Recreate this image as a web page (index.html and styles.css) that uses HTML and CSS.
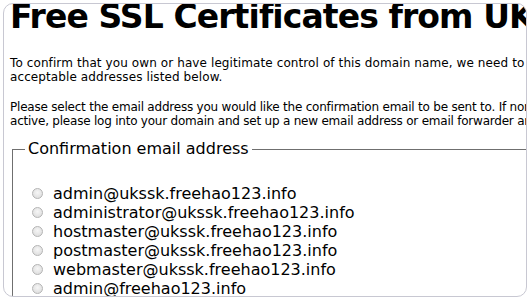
FILE: index.html
```
<!DOCTYPE html>
<html lang="en">
<head>
    <meta charset="UTF-8">
    <title>Free SSL Certificates from UKSSK</title>
    <link rel="stylesheet" href="styles.css">
</head>
<body>
<div class="frame">
    <div class="page">
        <h1>Free SSL Certificates from UKSSK</h1>
        <p class="intro">To confirm that you own or have legitimate control of this domain name, we need to send an email to one of the<br>acceptable addresses listed below.</p>
        <p class="note">Please select the email address you would like the confirmation email to be sent to. If none of these addresses are<br>active, please log into your domain and set up a new email address or email forwarder and then try again.</p>
        <fieldset class="choices">
            <legend>Confirmation email address</legend>
            <div class="choice-list">
                <label class="choice"><input type="radio" name="email" value="admin@ukssk.freehao123.info">admin@ukssk.freehao123.info</label>
                <label class="choice"><input type="radio" name="email" value="administrator@ukssk.freehao123.info">administrator@ukssk.freehao123.info</label>
                <label class="choice"><input type="radio" name="email" value="hostmaster@ukssk.freehao123.info">hostmaster@ukssk.freehao123.info</label>
                <label class="choice"><input type="radio" name="email" value="postmaster@ukssk.freehao123.info">postmaster@ukssk.freehao123.info</label>
                <label class="choice"><input type="radio" name="email" value="webmaster@ukssk.freehao123.info">webmaster@ukssk.freehao123.info</label>
                <label class="choice"><input type="radio" name="email" value="admin@freehao123.info">admin@freehao123.info</label>
                <label class="choice"><input type="radio" name="email" value="administrator@freehao123.info">administrator@freehao123.info</label>
            </div>
        </fieldset>
    </div>
</div>
</body>
</html>
```

FILE: styles.css
```
html, body{
    margin: 0;
    background: #ffffff;
}
.frame{
    width: 522px;
    height: 292px;
    margin: 3px;
    border: 1px solid #c8c8d2;
    border-radius: 10px;
    overflow: hidden;
    background: #ffffff;
}
.page{
    width: 1000px;
    padding: 0 6px;
    font-family: "DejaVu Sans", Verdana, sans-serif;
    color: #000000;
}
.page h1{
    margin: -4px 0 0 0;
    font-size: 33px;
    line-height: 34px;
    letter-spacing: -0.9px;
    font-weight: bold;
    white-space: nowrap;
}
.page p{
    margin: 22px 0 0 0;
    font-size: 12px;
    line-height: 14px;
    letter-spacing: 0.1px;
    white-space: nowrap;
}
.page p.note{
    margin-top: 16px;
    letter-spacing: -0.22px;
}
.choices{
    margin: 11px 2px 0 2px;
    border: 1px solid #6f6f6f;
    font-size: 16px;
    padding: 0 0.75em 8px 0.75em;
}
.choices legend{
    padding: 0 3px;
    line-height: 20px;
}
.choice-list{
    display: flex;
    flex-direction: column;
    padding: 25px 0 0 7px;
}
.choice{
    display: flex;
    align-items: center;
    line-height: 19px;
}
.choice input{
    appearance: none;
    -webkit-appearance: none;
    width: 11px;
    height: 11px;
    margin: 0 10px 0 0;
    border: 1px solid #b4b4b4;
    border-radius: 50%;
    background: radial-gradient(circle at 50% 40%, #f6f6f6, #d8d8d8);
}
```
